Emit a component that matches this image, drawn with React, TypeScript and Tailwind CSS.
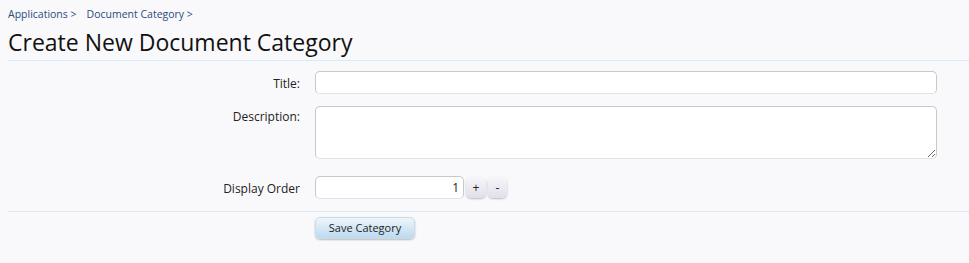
export default function App() {
  return (
    <div className="min-h-[263px] w-full bg-[#f9f9fb] text-[#222] font-['Open_Sans',sans-serif]">
      <div className="px-2 pt-[7px]">
        <div className="flex gap-[10px] text-[10.5px] leading-[14px] text-[#2b4a7c]">
          <span>Applications &gt;</span>
          <span>Document Category &gt;</span>
        </div>
        <h1 className="mt-[6px] text-[23px] leading-[30px] text-[#111]">Create New Document Category</h1>
      </div>
      <div className="ml-2 mt-[3px] border-t border-[#d7ebfa]" />

      <form className="pt-[10px]">
        <div className="grid grid-cols-[300px_1fr] gap-x-[15px] gap-y-[12px] pr-[32px] text-[12px]">
          <label className="pt-[4px] text-right text-[#222]">Title:</label>
          <input className="h-[23px] rounded-[5px] border border-[#c8c8c8] border-b-[#e2e2e2] bg-white px-1 outline-none" />

          <label className="pt-[2px] text-right text-[#222]">Description:</label>
          <textarea className="h-[53px] resize-y rounded-[5px] border border-[#c8c8c8] border-b-[#e2e2e2] bg-white px-1 outline-none" />

          <label className="mt-[5px] pt-[4px] text-right text-[#222]">Display Order</label>
          <div className="mt-[5px] flex items-center gap-[2px]">
            <input
              defaultValue="1"
              className="h-[23px] w-[149px] rounded-[5px] border border-[#c8c8c8] border-b-[#e2e2e2] bg-white px-1 text-right outline-none"
            />
            <button type="button" className="h-[21px] w-[20px] rounded-[5px] bg-gradient-to-b from-[#f6f6fa] to-[#dfe0ea] text-[12px] leading-none text-[#222] shadow-[0_1px_2px_rgba(0,0,0,0.25)]">+</button>
            <button type="button" className="h-[21px] w-[19px] rounded-[5px] bg-gradient-to-b from-[#f6f6fa] to-[#dfe0ea] text-[12px] leading-none text-[#222] shadow-[0_1px_2px_rgba(0,0,0,0.25)]">-</button>
          </div>
        </div>

        <div className="ml-2 mt-[12px] border-t border-[#dce9f4]" />

        <div className="pl-[315px] pt-[2px]">
          <button type="button" className="h-[22px] w-[100px] rounded-[5px] border border-[#c9dbe9] bg-gradient-to-b from-[#eef5fb] to-[#bcdaf0] text-[11px] text-[#222] shadow-[0_1px_2px_rgba(0,0,0,0.25)]">
            Save Category
          </button>
        </div>
      </form>
    </div>
  );
}
